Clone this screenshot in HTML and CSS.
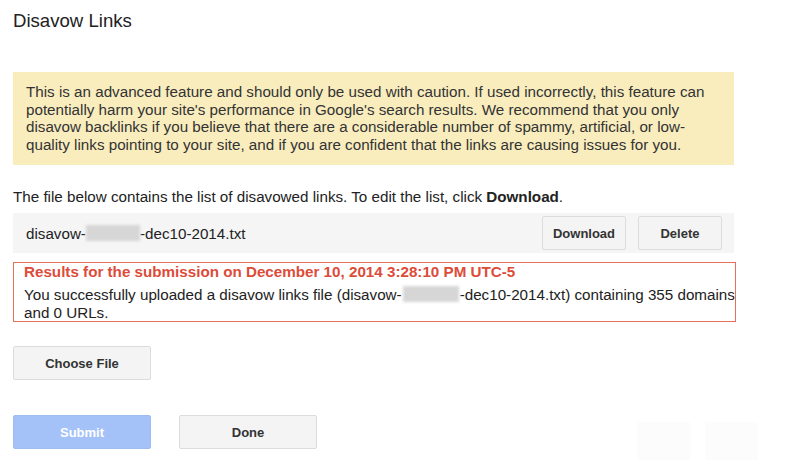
FILE: index.html
```html
<!DOCTYPE html>
<html>
<head>
<meta charset="utf-8">
<link rel="stylesheet" href="styles.css">
</head>
<body>
<div class="page">
  <h1 class="title">Disavow Links</h1>
  <div class="warning">This is an advanced feature and should only be used with caution. If used incorrectly, this feature can potentially harm your site's performance in Google's search results. We recommend that you only disavow backlinks if you believe that there are a considerable number of spammy, artificial, or low-quality links pointing to your site, and if you are confident that the links are causing issues for you.</div>
  <p class="intro">The file below contains the list of disavowed links. To edit the list, click <b>Download</b>.</p>
  <div class="file-row">
    <span class="fname">disavow-<span class="blur"></span>-dec10-2014.txt</span>
    <div class="file-actions">
      <button class="btn btn-sm">Download</button>
      <button class="btn btn-sm">Delete</button>
    </div>
  </div>
  <div class="result">
    <div class="result-title">Results for the submission on December 10, 2014 3:28:10 PM UTC-5</div>
    <div class="result-text">You successfully uploaded a disavow links file (disavow-<span class="blur blur2"></span>-dec10-2014.txt) containing 355 domains and 0 URLs.</div>
  </div>
  <div class="choose"><button class="btn btn-lg">Choose File</button></div>
  <div class="actions">
    <button class="btn btn-lg btn-primary">Submit</button>
    <button class="btn btn-lg">Done</button>
  </div>
</div>
<div class="ghosts">
  <span class="ghost"></span><span class="ghost"></span>
</div>
</body>
</html>
```
FILE: styles.css
```css
html, body {
  margin: 0;
  padding: 0;
  background: #fff;
}
body {
  font-family: "Liberation Sans", Arial, sans-serif;
  color: #222;
  width: 800px;
  height: 460px;
  overflow: hidden;
  position: relative;
}
.page {
  padding: 0 64px 0 13px;
}
.title {
  font-size: 18.6px;
  font-weight: normal;
  margin: 0;
  padding-top: 11px;
  line-height: 20px;
  color: #222;
}
.warning {
  margin-top: 41px;
  width: 721px;
  box-sizing: border-box;
  background: #f9edbe;
  padding: 11px 13px 9px 13px;
  font-size: 15.2px;
  line-height: 17.5px;
  color: #333;
  height: 93px;
}
.intro {
  margin: 23px 0 0 0;
  font-size: 15.2px;
  line-height: 18px;
  color: #222;
}
.file-row {
  margin-top: 7px;
  width: 721px;
  height: 40px;
  box-sizing: border-box;
  background: #f5f5f5;
  display: flex;
  align-items: center;
  justify-content: space-between;
  padding: 0 12px 0 13px;
}
.fname {
  font-size: 15.2px;
  color: #222;
  display: flex;
  align-items: center;
}
.blur {
  display: inline-block;
  width: 54px;
  height: 16px;
  background: #d6d6d6;
  filter: blur(1.5px);
}
.blur2 {
  width: 56px;
  margin: 0 1px;
}
.file-actions {
  display: flex;
  gap: 12px;
}
.btn {
  font-family: "Liberation Sans", Arial, sans-serif;
  font-weight: bold;
  font-size: 13px;
  color: #333;
  background: #f4f4f4;
  border: 1px solid #dcdcdc;
  border-radius: 2px;
  padding: 0;
  box-sizing: border-box;
}
.btn-sm {
  width: 84px;
  height: 34px;
}
.btn-lg {
  width: 138px;
  height: 34px;
}
.btn-primary {
  background: #a4c2f8;
  border-color: #9dbcf2;
  color: #fff;
}
.result {
  margin-top: 9px;
  width: 723px;
  height: 60px;
  box-sizing: border-box;
  border: 1.5px solid #e8705b;
  padding: 0 0 0 10px;
}
.result-title {
  color: #dd4b39;
  font-weight: bold;
  font-size: 15.2px;
  line-height: 17px;
}
.result-text {
  margin-top: 6px;
  font-size: 15.2px;
  line-height: 17.5px;
  color: #222;
}
.result-text .blur {
  vertical-align: -2px;
}
.choose {
  margin-top: 24px;
}
.actions {
  margin-top: 35px;
  display: flex;
  gap: 28px;
}
.ghosts {
  position: absolute;
  left: 637px;
  top: 422px;
  display: flex;
  gap: 15px;
}
.ghost {
  width: 53px;
  height: 38px;
  background: #fcfcfc;
}
```
